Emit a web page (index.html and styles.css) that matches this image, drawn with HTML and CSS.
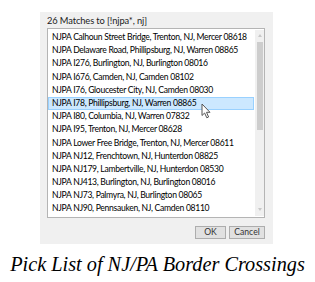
FILE: index.html
```html
<!DOCTYPE html>
<html lang="en">
<head>
  <meta charset="UTF-8">
  <title>Pick List</title>
  <link rel="stylesheet" href="styles.css">
</head>
<body>
  <div class="page">
    <!-- dialog -->
    <div class="dlg">
      <div class="dlg-title">26 Matches to [!njpa*, nj]</div>
      <div class="lst">
        <ul class="items">
          <li>NJPA Calhoun Street Bridge, Trenton, NJ, Mercer 08618</li>
          <li>NJPA Delaware Road, Phillipsburg, NJ, Warren 08865</li>
          <li>NJPA I276, Burlington, NJ, Burlington 08016</li>
          <li>NJPA I676, Camden, NJ, Camden 08102</li>
          <li>NJPA I76, Gloucester City, NJ, Camden 08030</li>
          <li class="sel">NJPA I78, Phillipsburg, NJ, Warren 08865</li>
          <li>NJPA I80, Columbia, NJ, Warren 07832</li>
          <li>NJPA I95, Trenton, NJ, Mercer 08628</li>
          <li>NJPA Lower Free Bridge, Trenton, NJ, Mercer 08611</li>
          <li>NJPA NJ12, Frenchtown, NJ, Hunterdon 08825</li>
          <li>NJPA NJ179, Lambertville, NJ, Hunterdon 08530</li>
          <li>NJPA NJ413, Burlington, NJ, Burlington 08016</li>
          <li>NJPA NJ73, Palmyra, NJ, Burlington 08065</li>
          <li>NJPA NJ90, Pennsauken, NJ, Camden 08110</li>
        </ul>
        <div class="sbar">
          <span class="arr up"></span>
          <span class="thumb"></span>
          <span class="arr dn"></span>
        </div>
      </div>
      <div class="btns">
        <span class="btn ok">OK</span>
        <span class="btn cancel">Cancel</span>
      </div>
      <!-- mouse pointer -->
      <svg class="cursor" width="11" height="16" viewBox="0 0 11 16">
        <path d="M1 1 L1 12.5 L3.6 10 L5.8 14.8 L7.6 14 L5.5 9.3 L9 9.3 Z" fill="#fff" stroke="#555" stroke-width="1"/>
      </svg>
    </div>

    <p class="cap">Pick List of NJ/PA Border Crossings</p>
  </div>
</body>
</html>
```

FILE: styles.css
```css
html, body{
  margin: 0;
  padding: 0;
  background: #fff;
}
ul{
  margin: 0;
  padding: 0;
  list-style: none;
}

.page{
  width: 315px;
  height: 282px;
  padding-top: 12px;
  box-sizing: border-box;
}

/* dialog panel */
.dlg{
  position: relative;
  width: 233px;
  height: 232px;
  margin-left: 40px;
  padding: 2px 8px 0 7px;
  box-sizing: border-box;
  background: #f0f0f0;
  font-family: Lato, sans-serif;
  font-size: 8.6px;
  letter-spacing: -0.3px;
  color: #000;
}

.dlg-title{
  height: 14px;
  line-height: 14px;
  font-size: 9.3px;
  letter-spacing: -0.1px;
  color: #222;
}

/* list box */
.lst{
  display: flex;
  height: 190px;
  border: 1px solid #b4b4b4;
  background: #fff;
  box-sizing: border-box;
}
.items{
  flex: 1;
  padding: 2px 1px 0 0;
  overflow: hidden;
}
.items>li{
  height: 13.2px;
  line-height: 13.2px;
  padding-left: 4px;
  white-space: nowrap;
  box-sizing: border-box;
}
.items>li.sel{
  background: #cce8ff;
  border: 1px solid #99d1ff;
  line-height: 11.2px;
  padding-left: 3px;
}

/* scroll bar */
.sbar{
  width: 9px;
  display: flex;
  flex-direction: column;
  align-items: center;
  background: #f0f0f0;
  margin: 1px 0;
}
.arr{
  width: 0;
  height: 0;
  margin: 4px 0 5px;
  border-left: 2.5px solid transparent;
  border-right: 2.5px solid transparent;
}
.arr.up{
  border-bottom: 3px solid #c8c8c8;
}
.arr.dn{
  margin-top: auto;
  border-top: 3px solid #c8c8c8;
}
.thumb{
  width: 6px;
  height: 88px;
  background: #cdcdcd;
}

/* buttons */
.btns{
  display: flex;
  justify-content: flex-end;
  gap: 3px;
  margin-top: 8px;
}
.btn{
  height: 13px;
  line-height: 11px;
  border: 1px solid #adadad;
  background: #e1e1e1;
  text-align: center;
  color: #333;
  letter-spacing: 0;
  box-sizing: border-box;
}
.btn.ok{
  width: 31px;
}
.btn.cancel{
  width: 36px;
}

.cursor{
  position: absolute;
  left: 161px;
  top: 91px;
}

/* caption */
.cap{
  margin: 9px 0 0;
  font: italic 20.3px/22px "Liberation Serif", serif;
  text-align: center;
  color: #000;
}
```
